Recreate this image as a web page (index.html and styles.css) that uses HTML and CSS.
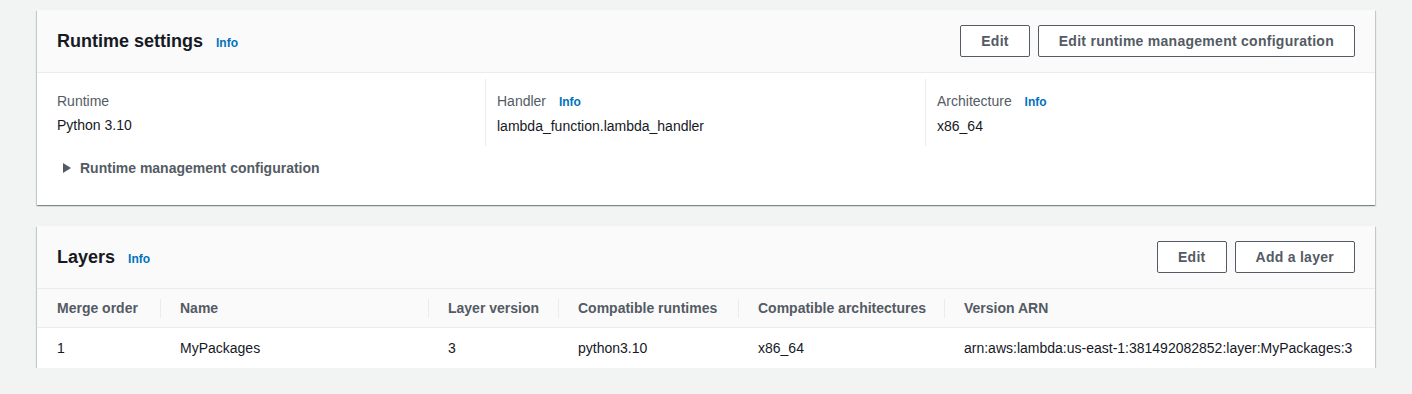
FILE: index.html
```html
<!DOCTYPE html>
<html>
  <head>
    <meta charset="utf-8" />
    <title>Runtime settings</title>
    <link rel="stylesheet" href="styles.css">
  </head>
  <body>
    <div class="page">
      <div class="card">
        <div class="card-header">
          <div class="title">
            <h2>Runtime settings</h2>
            <a class="info" href="#">Info</a>
          </div>
          <div class="actions">
            <button>Edit</button>
            <button>Edit runtime management configuration</button>
          </div>
        </div>
        <div class="card-body">
          <div class="columns">
            <div class="col">
              <div class="label">Runtime</div>
              <div class="value">Python 3.10</div>
            </div>
            <div class="col">
              <div class="label">Handler <a class="info" href="#">Info</a></div>
              <div class="value">lambda_function.lambda_handler</div>
            </div>
            <div class="col">
              <div class="label">Architecture <a class="info" href="#">Info</a></div>
              <div class="value">x86_64</div>
            </div>
          </div>
          <div class="expander">
            <span class="caret"></span>
            <span>Runtime management configuration</span>
          </div>
        </div>
      </div>

      <div class="card">
        <div class="card-header">
          <div class="title">
            <h2>Layers</h2>
            <a class="info" href="#">Info</a>
          </div>
          <div class="actions">
            <button>Edit</button>
            <button>Add a layer</button>
          </div>
        </div>
        <table class="layers">
          <thead>
            <tr>
              <th class="w-order">Merge order</th>
              <th class="w-name">Name</th>
              <th class="w-version">Layer version</th>
              <th class="w-runtimes">Compatible runtimes</th>
              <th class="w-arch">Compatible architectures</th>
              <th>Version ARN</th>
            </tr>
          </thead>
          <tbody>
            <tr>
              <td>1</td>
              <td>MyPackages</td>
              <td>3</td>
              <td>python3.10</td>
              <td>x86_64</td>
              <td>arn:aws:lambda:us-east-1:381492082852:layer:MyPackages:3</td>
            </tr>
          </tbody>
        </table>
      </div>
    </div>
  </body>
</html>
```

FILE: styles.css
```css
* {
  margin: 0;
  padding: 0;
  box-sizing: border-box;
}

body {
  background: #f2f3f3;
  font-family: "Liberation Sans", Arial, sans-serif;
  font-size: 14px;
  color: #16191f;
}

.page {
  padding: 10px 37px 0 37px;
  width: 1412px;
  display: flex;
  flex-direction: column;
  gap: 21px;
}

.card {
  background: #fff;
  box-shadow: 0 1px 1px 0 rgba(0, 28, 36, 0.3),
    1px 1px 1px 0 rgba(0, 28, 36, 0.15), -1px 1px 1px 0 rgba(0, 28, 36, 0.15);
}

.card-header {
  display: flex;
  justify-content: space-between;
  align-items: center;
  background: #fafafa;
  border-bottom: 1px solid #eaeded;
  padding: 15px 20px 15px 20px;
}

.title {
  display: flex;
  align-items: baseline;
  gap: 13px;
}

h2 {
  font-size: 18px;
  line-height: 22px;
  font-weight: 700;
  color: #16191f;
}

.info {
  font-size: 12px;
  font-weight: 700;
  color: #0073bb;
  text-decoration: none;
}

.actions {
  display: flex;
  gap: 8px;
}

button {
  height: 32px;
  padding: 0 20px;
  border: 1px solid #545b64;
  border-radius: 2px;
  background: #fff;
  color: #545b64;
  font-family: inherit;
  font-size: 14px;
  font-weight: 700;
  letter-spacing: 0.27px;
}

.card-body {
  padding: 6px 20px 26px 20px;
}

.columns {
  display: grid;
  grid-template-columns: 1fr 1fr 1fr;
  margin: 0 -10px 0 -12px;
}

.col {
  border-left: 1px solid #eaeded;
  padding: 10px 0 8px 11px;
  line-height: 24px;
}

.col:first-child {
  border-left-color: transparent;
}

.label {
  color: #545b64;
}

.label .info {
  margin-left: 9px;
}

.expander {
  display: flex;
  align-items: center;
  gap: 9px;
  margin-top: 11px;
  padding-left: 6px;
  font-weight: 700;
  color: #545b64;
  line-height: 22px;
}

.caret {
  width: 0;
  height: 0;
  border-top: 5px solid transparent;
  border-bottom: 5px solid transparent;
  border-left: 8px solid #545b64;
}

.layers {
  width: 100%;
  border-collapse: collapse;
  table-layout: fixed;
}

.layers th {
  position: relative;
  height: 38px;
  padding: 0 20px;
  background: #fafafa;
  border-bottom: 1px solid #eaeded;
  color: #545b64;
  font-weight: 700;
  text-align: left;
  white-space: nowrap;
}

.layers th + th::before {
  content: "";
  position: absolute;
  left: 0;
  top: 10px;
  bottom: 9px;
  border-left: 1px solid #eaeded;
}

.layers td {
  height: 41px;
  padding: 0 20px;
  white-space: nowrap;
}

.w-order {
  width: 123px;
}

.w-name {
  width: 268px;
}

.w-version {
  width: 130px;
}

.w-runtimes {
  width: 180px;
}

.w-arch {
  width: 206px;
}
```
